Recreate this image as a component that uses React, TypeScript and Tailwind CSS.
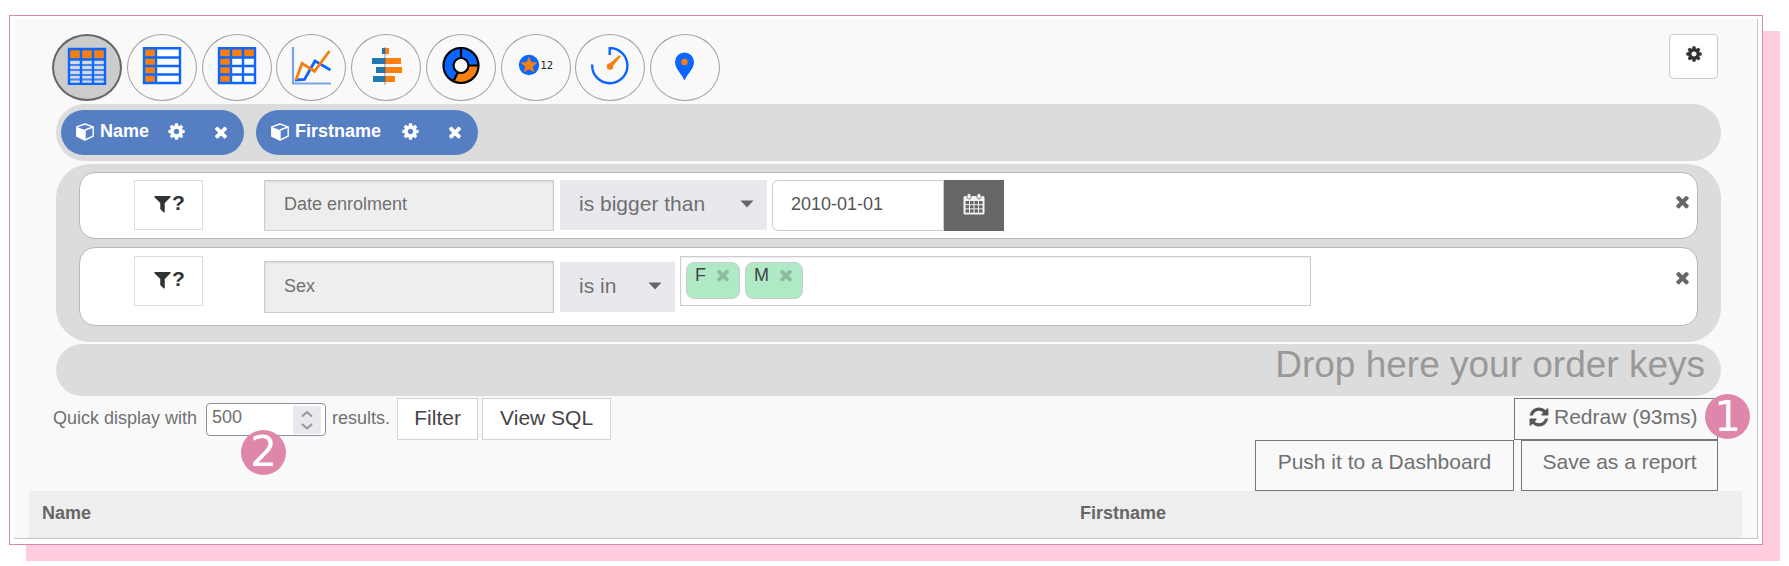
import type { ReactNode } from "react";

const COG =
  "M1152 896q0-106-75-181t-181-75-181 75-75 181 75 181 181 75 181-75 75-181zm512-109v222q0 12-8 23t-20 13l-185 28q-19 54-39 91 35 50 107 138 10 12 10 25t-9 23q-27 37-99 108t-94 71q-12 0-26-9l-138-108q-44 23-91 38-16 136-29 186-7 28-36 28h-222q-14 0-24.500-8.500t-11.500-21.500l-28-184q-49-16-90-37l-141 107q-10 9-25 9-14 0-25-11-126-114-165-168-7-10-7-23 0-12 8-23 15-21 51-66.500t54-70.500q-27-50-41-99l-183-27q-13-2-21-12.500t-8-23.500v-222q0-12 8-23t19-13l186-28q14-46 39-92-40-57-107-138-10-12-10-24 0-10 9-23 26-36 98.500-107.500t94.500-71.500q13 0 26 10l138 107q44-23 91-38 16-136 29-186 7-28 36-28h222q14 0 24.500 8.500t11.500 21.500l28 184q49 16 90 37l142-107q9-9 24-9 13 0 25 10 129 119 165 170 7 8 7 22 0 12-8 23-15 21-51 66.500t-54 70.500q26 50 41 98l183 28q13 2 21 12.500t8 23.500z";
const TIMES =
  "M1490 1322q0 40-28 68l-136 136q-28 28-68 28t-68-28l-294-294-294 294q-28 28-68 28t-68-28l-136-136q-28-28-28-68t28-68l294-294-294-294q-28-28-28-68t28-68l136-136q28-28 68-28t68 28l294 294 294-294q28-28 68-28t68 28l136 136q28 28 28 68t-28 68l-294 294 294 294q28 28 28 68z";
const FILTER =
  "M1595 295q17 41-14 70l-493 493v742q0 42-39 59-13 5-25 5-27 0-45-19l-256-256q-19-19-19-45v-486l-493-493q-31-29-14-70 17-39 59-39h1280q42 0 59 39z";
const REFRESH =
  "M1639 1056q0 5-1 7-64 268-268 434.500t-478 166.500q-146 0-282.500-55t-243.500-157l-129 129q-19 19-45 19t-45-19-19-45v-448q0-26 19-45t45-19h448q26 0 45 19t19 45-19 45l-137 137q71 66 161 102t187 36q134 0 250-65t186-179q11-17 53-117 8-23 30-23h192q13 0 22.500 9.500t9.500 22.500zm25-800v448q0 26-19 45t-45 19h-448q-26 0-45-19t-19-45 19-45l138-138q-148-137-349-137-134 0-250 65t-186 179q-11 17-53 117-8 23-30 23h-199q-13 0-22.500-9.500t-9.500-22.500v-7q65-268 270-434.500t480-166.500q146 0 284 55.500t245 156.500l130-129q19-19 45-19t45 19 19 45z";

function Glyph({ d, className }: { d: string; className: string }) {
  return (
    <svg viewBox="0 0 1792 1792" fill="currentColor" className={className} aria-hidden="true">
      <path d={d} />
    </svg>
  );
}

function CubeIcon() {
  return (
    <svg viewBox="0 0 18 18" className="h-[18px] w-[18px]" aria-hidden="true">
      <path d="M9 1 17.200 3.800v9.400L9 17 0.800 13.200V3.800Z" fill="none" stroke="currentColor" strokeWidth="1.400" strokeLinejoin="round" />
      <path d="M0.800 4 9 7v10L0.800 13.200Z" fill="currentColor" />
      <path d="m9 7 8-3M9 7v10" stroke="currentColor" strokeWidth="1.400" />
    </svg>
  );
}

function CalendarIcon() {
  return (
    <svg viewBox="0 0 22 22" className="h-[22px] w-[22px]" aria-hidden="true">
      <rect x="0.500" y="3" width="21" height="18.500" rx="1.500" fill="#f4f4f4" />
      <rect x="4" y="0.500" width="4" height="5.500" rx="1.800" fill="#f4f4f4" stroke="#666" strokeWidth="0.800" />
      <rect x="14" y="0.500" width="4" height="5.500" rx="1.800" fill="#f4f4f4" stroke="#666" strokeWidth="0.800" />
      {[8, 12.2, 16.4].map((y) =>
        [2.5, 7, 11.5, 16].map((x) => <rect key={`${x}-${y}`} x={x} y={y} width="3.500" height="3.200" fill="#666" />)
      )}
    </svg>
  );
}

const charts: { label: string; art: ReactNode }[] = [
  {
    label: "Table",
    art: (
      <>
        <path d="M2 2h36v11H2z" fill="#f57f0f" />
        <path d="M2 13h36v24H2z" fill="#d4d8e0" />
        <path d="M2 18h36M2 23h36M2 28h36M2 32.500h36" stroke="#3f83f5" strokeWidth="2" />
        <path d="M2 2h36v35H2zM2 12.500h36M14 2v35M26 2v35" fill="none" stroke="#0a66ff" strokeWidth="2.400" />
      </>
    ),
  },
  {
    label: "List",
    art: (
      <>
        <path d="M2 1h12v35H2z" fill="#f57f0f" />
        <path d="M14 1h24v35H14z" fill="#fff" />
        <path d="M2 1.200h36V36H2zM2 10.500h36M2 19h36M2 27.500h36M14 1v35" fill="none" stroke="#0a66ff" strokeWidth="2.400" />
      </>
    ),
  },
  {
    label: "Pivot table",
    art: (
      <>
        <path d="M2 1h36v35H2z" fill="#fff" />
        <path d="M2 1h36v9.500H14V36H2z" fill="#f57f0f" />
        <path d="M2 1.200h36V36H2zM2 10.500h36M2 19h36M2 27.500h36M14 1v35M26 1v35" fill="none" stroke="#0a66ff" strokeWidth="2.400" />
      </>
    ),
  },
  {
    label: "Line chart",
    art: (
      <>
        <path d="M2 0v36.500h38" fill="none" stroke="#7ba3ea" strokeWidth="2.200" />
        <path d="m4 33 9.500-.5L24 14l15.500 9" fill="none" stroke="#0a66ff" strokeWidth="2.800" />
        <path d="m5 33 6-16.700 12.500 8L38.500 4" fill="none" stroke="#f57f0f" strokeWidth="2.800" />
      </>
    ),
  },
  {
    label: "Bar chart",
    art: (
      <>
        <path d="M16 1h3v6h-3zM6 11h13v6H6zM10 20h9v6h-9zM7 29h12v6H7z" fill="#2079b4" />
        <path d="M19 1h4v6h-4zM19 11h16v6H19zM19 20h17v6H19zM19 29h10v6H19z" fill="#ff7f0e" />
        <path d="M19 0v38" stroke="#555" strokeWidth="0.600" />
      </>
    ),
  },
  {
    label: "Pie chart",
    art: (
      <>
        <circle cx="20" cy="18.500" r="12.500" fill="none" stroke="#0a66ff" strokeWidth="10" />
        <path d="M37.500 18.500a17.500 17.500 0 0 1-25 15.800l4.200-9A8 8 0 0 0 28 18.500Z" fill="#f57f0f" />
        <g fill="none" stroke="#000" strokeWidth="2.200">
          <circle cx="20" cy="18.500" r="17.500" />
          <circle cx="20" cy="18.500" r="7.500" />
          <path d="M20 1v10M27.500 18.500h10M16.800 25.300l-4.300 9" />
        </g>
      </>
    ),
  },
  {
    label: "Figure",
    art: (
      <>
        <circle cx="13" cy="18" r="10.200" fill="#0a66ff" />
        <path d="m13 10 2.200 5.200 5.600.5-4.200 3.700 1.300 5.500-4.900-2.900-4.900 2.900 1.300-5.500-4.200-3.700 5.600-.5Z" fill="#f57f0f" stroke="#f57f0f" strokeWidth="0.500" />
        <text x="24.500" y="22" fontSize="10" fill="#222" fontFamily="DejaVu Sans, sans-serif">12</text>
      </>
    ),
  },
  {
    label: "Gauge",
    art: (
      <>
        <path d="M19.700 8V1a17.600 17.600 0 1 1-17.500 17.300V17.500" fill="none" stroke="#0a66ff" strokeWidth="2.400" />
        <path d="m18.500 18 11-9.500.8.800-9.300 11.700Z" fill="#f57f0f" stroke="#f57f0f" strokeWidth="1" />
        <circle cx="20" cy="19.500" r="3.200" fill="#f57f0f" />
      </>
    ),
  },
  {
    label: "Map",
    art: (
      <>
        <path d="M19.500 33.500C17 27 10 22 10 15a9.500 9.500 0 0 1 19 0c0 7-7 12-9.500 18.500Z" fill="#0a66ff" />
        <circle cx="19.500" cy="15" r="3.200" fill="#f57f0f" />
      </>
    ),
  },
];

function Chip({ name, className }: { name: string; className: string }) {
  return (
    <div className={`flex h-[45px] items-center rounded-full bg-[#567fc3] pb-[2px] pl-[15px] text-[18px] font-bold text-white ${className}`}>
      <CubeIcon />
      <span className="ml-[6px] flex-1">{name}</span>
      <button type="button" aria-label={`${name} settings`} className="mr-[26px]">
        <Glyph d={COG} className="h-[19px] w-[19px]" />
      </button>
      <button type="button" aria-label={`Remove ${name}`} className="mr-[14px]">
        <Glyph d={TIMES} className="h-[18px] w-[18px]" />
      </button>
    </div>
  );
}

function FilterToggle() {
  return (
    <button
      type="button"
      aria-label="Ask for filter value"
      className="mr-[61px] flex h-[50px] w-[69px] shrink-0 items-center justify-center border border-[#ddd] bg-white pb-1 text-[21px] font-bold text-[#333]"
    >
      <Glyph d={FILTER} className="-mr-px h-[21px] w-[21px]" />
      <span>?</span>
    </button>
  );
}

function Operator({ value, className }: { value: string; className: string }) {
  return (
    <div className={`relative ml-[6px] shrink-0 ${className}`}>
      <select
        aria-label="Operator"
        className="h-[50px] w-full appearance-none bg-[#e9e9ed] pb-[3px] pl-[19px] text-[21px] text-[#707070]"
      >
        <option>{value}</option>
      </select>
      <svg viewBox="0 0 14 8" className="pointer-events-none absolute top-[20px] right-[13px] h-2 w-[14px]" aria-hidden="true">
        <path d="M0.500 0.500h13L7 7.500Z" fill="#666" />
      </svg>
    </div>
  );
}

function RemoveRow() {
  return (
    <button type="button" aria-label="Remove filter" className="mt-[12px] mr-[5px] ml-auto text-[#666]">
      <Glyph d={TIMES} className="h-[19px] w-[19px]" />
    </button>
  );
}

function Tag({ name }: { name: string }) {
  return (
    <span className="flex h-[37px] rounded-lg border border-[#ccc] bg-[#afe9c6] pt-px pr-[7px] pl-[8px] text-[18px] leading-[22px] text-[#444]">
      {name}
      <button type="button" aria-label={`Remove ${name}`} className="ml-[8px] h-[22px] text-[#8ebca0]">
        <Glyph d={TIMES} className="h-[18px] w-[18px]" />
      </button>
    </span>
  );
}

const fieldClass =
  "w-[290px] shrink-0 border border-[#ccc] bg-[#eee] pb-[2px] pl-[19px] text-[18px] text-[#707070] shadow-[inset_0_1px_2px_rgba(0,0,0,0.1)]";
const rowClass = "flex items-start rounded-[16px] border border-[#b8b8b8] bg-white pl-[54px]";
const badgeClass =
  "absolute flex h-[45px] items-center justify-center rounded-full bg-[#de87aa] font-['DejaVu_Sans',sans-serif] text-[42px] leading-none text-white";
const outlineClass = "border border-[#777] text-[21px] text-[#707070]";

export default function App() {
  return (
    <main className="pt-[15px] pr-[26px] pb-[21px] pl-[9px] font-['Liberation_Sans',Arial,sans-serif] text-[18px] text-[#707070]">
      <div className="border border-[#de87aa] bg-white px-1 pt-[3px] pb-[5px] shadow-[17px_16px_0_#ffcce0]">
        <div className="border-r border-b border-[#c4c4c4] bg-[#f9f9f9] pt-[15px]">
          <div className="flex items-start justify-between pr-[39px] pl-[38px]">
            <div className="flex w-[668px] justify-between">
              {charts.map((chart, i) => (
                <button
                  key={chart.label}
                  type="button"
                  aria-label={chart.label}
                  className={`flex h-[67px] w-[70px] items-center justify-center rounded-[50%] pb-[3px] ${
                    i === 0 ? "border-2 border-[#666] bg-[#ccc]" : "border border-[#a0a0a0]"
                  }`}
                >
                  <svg viewBox="0 0 40 38" className="h-[38px] w-[40px]" aria-hidden="true">
                    {chart.art}
                  </svg>
                </button>
              ))}
            </div>
            <button
              type="button"
              aria-label="Settings"
              className="flex h-[45px] w-[49px] items-center justify-center rounded border border-[#ccc] bg-white pb-[5px] text-[#333]"
            >
              <Glyph d={COG} className="h-[18px] w-[18px]" />
            </button>
          </div>

          <div className="mt-[3px] mr-[36px] ml-[42px] flex h-[57px] items-center gap-[12px] rounded-full bg-[#dcdcdc] pl-[5px]">
            <Chip name="Name" className="w-[183px]" />
            <Chip name="Firstname" className="w-[222px]" />
          </div>

          <div className="mt-[3px] mr-[36px] ml-[42px] flex flex-col gap-2 rounded-[34px] bg-[#dcdcdc] px-[23px] pt-2 pb-4">
            <div className={`${rowClass} py-[7px]`}>
              <FilterToggle />
              <input readOnly aria-label="Filter field" value="Date enrolment" className={`h-[51px] ${fieldClass}`} />
              <Operator value="is bigger than" className="w-[207px]" />
              <input
                aria-label="Date"
                defaultValue="2010-01-01"
                className="ml-[5px] h-[51px] w-[172px] rounded-l-md border border-[#ccc] bg-white pb-[2px] pl-[18px] text-[18px] text-[#555]"
              />
              <button type="button" aria-label="Pick date" className="flex h-[51px] w-[60px] items-center justify-center bg-[#666] pb-[3px]">
                <CalendarIcon />
              </button>
              <RemoveRow />
            </div>
            <div className={`${rowClass} h-[79px] pt-[8px]`}>
              <FilterToggle />
              <input readOnly aria-label="Filter field" value="Sex" className={`mt-[5px] h-[52px] ${fieldClass}`} />
              <Operator value="is in" className="mt-[6px] w-[115px]" />
              <div className="ml-[5px] flex h-[50px] w-[631px] gap-[5px] border border-[#ccc] bg-white pt-[5px] pl-[5px] shadow-[inset_0_1px_2px_rgba(0,0,0,0.08)]">
                <Tag name="F" />
                <Tag name="M" />
              </div>
              <RemoveRow />
            </div>
          </div>

          <div className="mt-[2px] mr-[36px] ml-[42px] h-[52px] rounded-full bg-[#dcdcdc] pr-4 text-right text-[37px] leading-[42px] text-[#999]">
            Drop here your order keys
          </div>

          <div className="mt-[2px] flex items-start justify-between px-[39px]">
            <div className="flex h-[42px] items-center">
              <label htmlFor="limit" className="pb-[2px]">Quick display with</label>
              <div className="relative ml-[9px] h-[33px] w-[120px]">
                <input
                  id="limit"
                  type="number"
                  defaultValue={500}
                  className="h-full w-full appearance-none rounded border border-[#8f8f9d] bg-white pb-[3px] pl-[5px] text-[18px] text-[#707070] [-moz-appearance:textfield] [&::-webkit-inner-spin-button]:appearance-none"
                />
                <svg viewBox="0 0 28 28" className="pointer-events-none absolute top-[3px] right-[5px] h-[28px] w-[28px] bg-[#e9e9ed]" aria-hidden="true">
                  <path d="m9 10.500 5-4.500 5 4.500M9 18l5 4.500 5-4.500" fill="none" stroke="#9494a5" strokeWidth="2" />
                </svg>
                <span className={`${badgeClass} top-[27px] left-[35px] w-[45px]`}>2</span>
              </div>
              <span className="ml-[6px] pb-[2px]">results.</span>
              <button type="button" className="ml-[7px] h-[42px] w-[81px] border border-[#d4d4d4] bg-white pb-[3px] text-[21px] text-[#444]">
                Filter
              </button>
              <button type="button" className="ml-1 h-[42px] w-[129px] border border-[#d4d4d4] bg-white pb-[3px] text-[21px] text-[#444]">
                View SQL
              </button>
            </div>
            <div className="flex flex-col items-end">
              <div className="relative">
                <button type="button" className={`flex h-[42px] w-[204px] items-center gap-[4px] pb-[4px] pl-[13px] ${outlineClass}`}>
                  <Glyph d={REFRESH} className="h-[22px] w-[22px] text-[#555]" />
                  Redraw (93ms)
                </button>
                <span className={`${badgeClass} -top-1 -right-8 w-[45px]`}>1</span>
              </div>
              <div className="flex gap-[7px]">
                <button type="button" className={`h-[51px] w-[259px] pb-[7px] ${outlineClass}`}>Push it to a Dashboard</button>
                <button type="button" className={`h-[51px] w-[197px] pb-[7px] ${outlineClass}`}>Save as a report</button>
              </div>
            </div>
          </div>

          <div className="px-[15px]">
            <table className="w-full table-fixed bg-[#eee] text-left font-bold text-[#666]">
              <thead>
                <tr className="h-[47px]">
                  <th className="w-[60.6%] pb-[3px] pl-[13px]">Name</th>
                  <th className="pb-[3px] pl-[13px]">Firstname</th>
                </tr>
              </thead>
            </table>
          </div>
        </div>
      </div>
    </main>
  );
}
